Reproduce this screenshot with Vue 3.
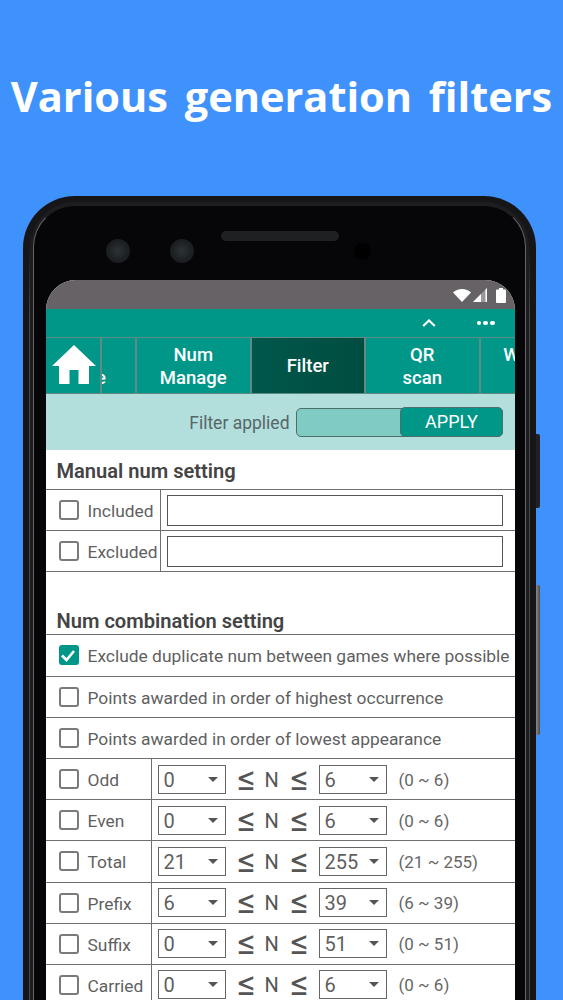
<script setup>
const tabs = [
  { id: 'gen', lines: ['Num', 'Create'] },
  { id: 'manage', lines: ['Num', 'Manage'] },
  { id: 'filter', lines: ['Filter'], active: true },
  { id: 'qr', lines: ['QR', 'scan'] },
  { id: 'win', lines: ['Winning', 'stats'] }
]
const manual = ['Included', 'Excluded']
const combos = [
  { label: 'Exclude duplicate num between games where possible', checked: true },
  { label: 'Points awarded in order of highest occurrence' },
  { label: 'Points awarded in order of lowest appearance' }
]
const ranges = [
  { label: 'Odd', min: 0, max: 6 },
  { label: 'Even', min: 0, max: 6 },
  { label: 'Total', min: 21, max: 255 },
  { label: 'Prefix', min: 6, max: 39 },
  { label: 'Suffix', min: 0, max: 51 },
  { label: 'Carried', min: 0, max: 6 }
]
</script>

<template>
  <div class="page">
    <header class="hero"><h1>Various generation filters</h1></header>

    <div class="phone">
      <span class="side-btn power"></span>
      <span class="side-btn volume"></span>
      <div class="bezel">
        <div class="sensors">
          <span class="camera"></span>
          <span class="camera second"></span>
          <span class="speaker"></span>
          <span class="hole"></span>
        </div>

        <div class="screen">
          <div class="status">
            <svg class="s-wifi" viewBox="0 0 18 13"><path d="M0 3.6C2.4 1.3 5.5 0 9 0s6.600 1.300 9 3.600L9 13z" fill="#fff" /></svg>
            <svg class="s-signal" viewBox="0 0 14 14">
              <path d="M14 0V14H0z" fill="#fff" fill-opacity=".35" />
              <path d="M8 6V14H0zM14 0V14H12.500V1.500z" fill="#fff" />
            </svg>
            <svg class="s-batt" viewBox="0 0 10 15"><path d="M3 0h4v1.500h2a1 1 0 0 1 1 1V14a1 1 0 0 1-1 1H1a1 1 0 0 1-1-1V2.500a1 1 0 0 1 1-1h2z" fill="#fff" /></svg>
          </div>

          <div class="appbar">
            <svg class="chev" viewBox="0 0 14 8"><path d="M1.200 7 7 1.500 12.800 7" fill="none" stroke="#fff" stroke-width="2.200" /></svg>
            <div class="dots"><i></i><i></i><i></i></div>
          </div>

          <nav class="tabs">
            <div class="home">
              <svg viewBox="0 0 44 39"><path d="M22 0 44 21H37V39H26.500V25H17.500V39H7V21H0z" fill="#fff" /></svg>
            </div>
            <div v-for="t in tabs" :key="t.id" class="tab" :class="{ active: t.active }">
              <span v-for="l in t.lines" :key="l">{{ l }}</span>
            </div>
          </nav>

          <div class="filterbar">
            <span class="applied">Filter applied</span>
            <div class="toggle"><span class="apply">APPLY</span></div>
          </div>

          <div class="content">
            <h2 class="head">Manual num setting</h2>
            <div v-for="m in manual" :key="m" class="row split-manual">
              <label class="cell"><span class="box"></span><span class="lbl">{{ m }}</span></label>
              <div class="cell field"><span class="input"></span></div>
            </div>
            <div class="rule"></div>

            <h2 class="head second">Num combination setting</h2>
            <div v-for="c in combos" :key="c.label" class="row">
              <label class="cell">
                <span class="box" :class="{ on: c.checked }">
                  <svg v-if="c.checked" viewBox="0 0 20 20"><path d="M4 10.500 8.500 15 16 6" fill="none" stroke="#fff" stroke-width="2.600" /></svg>
                </span>
                <span class="lbl">{{ c.label }}</span>
              </label>
            </div>
            <div v-for="r in ranges" :key="r.label" class="row split-range">
              <label class="cell"><span class="box"></span><span class="lbl">{{ r.label }}</span></label>
              <div class="cell range">
                <span class="select"><span>{{ r.min }}</span><i></i></span>
                <span class="le">≤</span>
                <span class="n">N</span>
                <span class="le">≤</span>
                <span class="select"><span>{{ r.max }}</span><i></i></span>
                <span class="hint">({{ r.min }} ~ {{ r.max }})</span>
              </div>
            </div>
          </div>
        </div>
      </div>
    </div>
  </div>
</template>

<style scoped>
.page {
  width: 563px;
  height: 1000px;
  overflow: hidden;
  background: #3f92fb;
  font-family: Roboto, "Liberation Sans", sans-serif;
}
.hero {
  height: 196px;
  box-sizing: border-box;
  padding-top: 65px;
  text-align: center;
}
.hero h1 {
  margin: 0;
  font: 700 41.500px/62px "Open Sans", sans-serif;
  word-spacing: 6px;
  color: #fff;
  white-space: nowrap;
}

.phone {
  position: relative;
  width: 513px;
  margin-left: 23px;
  padding: 9px 10px 0;
  box-sizing: border-box;
  background: #161618;
  border-radius: 52px 52px 0 0;
}
.phone::before {
  content: "";
  position: absolute;
  top: 50px;
  bottom: 0;
  left: 6px;
  right: 6px;
  background:
    linear-gradient(transparent, #48484a 70px) left / 1px 100% no-repeat,
    linear-gradient(transparent, #48484a 70px) right / 1px 100% no-repeat;
  pointer-events: none;
}
.side-btn {
  position: absolute;
  left: 513px;
  width: 4px;
  background: #222226;
  border-radius: 0 2px 2px 0;
}
.power { top: 238px; height: 74px; }
.volume { top: 389px; height: 150px; background: linear-gradient(90deg, #8a8a8a, #4a4a4a); }

.bezel {
  padding: 0 9.5px 0 11.5px;
  background: #060608;
  border: solid #666668;
  border-top-color: #202022;
  border-width: 1px 1.5px 0;
  border-radius: 42px 42px 0 0;
  box-shadow: 0 0 0 3px #1d1d1f;
}
.sensors {
  display: flex;
  align-items: center;
  height: 74px;
  padding-left: 60px;
}
.camera {
  width: 24px;
  height: 24px;
  flex: none;
  border-radius: 50%;
  background: radial-gradient(circle, #2c3336 0, #1e2225 50%, #141719 100%);
  margin-top: 16px;
}
.camera.second { margin-left: 40px; }
.speaker {
  width: 118px;
  height: 10px;
  flex: none;
  margin: -14px 0 0 27px;
  border-radius: 5px;
  background: #1f2022;
}
.hole {
  width: 17px;
  height: 17px;
  flex: none;
  margin: 16px 0 0 15px;
  border-radius: 50%;
  background: #000;
}

.screen {
  width: 469px;
  border-radius: 30px 30px 0 0;
  overflow: hidden;
  background: #fff;
}
.status {
  height: 29px;
  box-sizing: border-box;
  padding: 1px 9px 0 0;
  background: #666266;
  display: flex;
  justify-content: flex-end;
  align-items: center;
}
.status svg { display: block; }
.s-wifi { width: 18px; height: 13px; }
.s-signal { width: 14px; height: 14px; margin-left: 2px; }
.s-batt { width: 10px; height: 15px; margin-left: 9px; }

.appbar {
  height: 28px;
  background: #009688;
  display: flex;
  justify-content: flex-end;
  align-items: center;
  padding-right: 20px;
}
.chev { width: 14px; height: 8px; margin: 0 41px 0 0; }
.dots { display: flex; gap: 2.250px; }
.dots i { width: 4.500px; height: 4.500px; border-radius: 50%; background: #fff; }

.tabs {
  position: relative;
  display: flex;
  height: 57px;
  background: #009688;
  overflow: hidden;
}
.home {
  position: absolute;
  left: 0;
  top: 0;
  z-index: 1;
  width: 56px;
  height: 100%;
  box-sizing: border-box;
  padding: 7px 0 0 6px;
  background: #009688;
  border: solid #5f8a85;
  border-width: 1px 2px 1px 0;
}
.home svg { display: block; width: 44px; height: 39px; }
.tab {
  flex: none;
  width: 114.500px;
  box-sizing: border-box;
  padding-top: 2px;
  border: solid #5f8a85;
  border-width: 1px 2px 1px 0;
  display: flex;
  flex-direction: column;
  align-items: center;
  justify-content: center;
  color: #fff;
  font-size: 18.500px;
  font-weight: 500;
  line-height: 23px;
}
.home + .tab { margin-left: -23px; }
.tab.active { background: linear-gradient(90deg, #00574b, #004d40); }

.filterbar {
  height: 56px;
  background: #b2dfdb;
  display: flex;
  justify-content: flex-end;
  align-items: center;
  padding-right: 12px;
}
.applied { padding-top: 2px; font-size: 17.500px; color: #56666a; margin-right: 6px; }
.toggle {
  width: 207px;
  height: 29px;
  box-sizing: border-box;
  border: 1.5px solid #4c6f6c;
  border-radius: 5px;
  background: #80cbc4;
  display: flex;
  justify-content: flex-end;
}
.apply {
  width: 103px;
  margin: -1.500px;
  box-sizing: border-box;
  border: 1.5px solid #4c6f6c;
  border-radius: 5px;
  background: #009688;
  color: #fff;
  font-size: 18px;
  line-height: 28px;
  text-align: center;
}

.content { color: #555; }
.head {
  margin: 0;
  height: 39px;
  padding-left: 11px;
  font-size: 20.100px;
  font-weight: 600;
  line-height: 43px;
  color: #444;
  box-sizing: border-box;
}
.head.second { margin-top: 35px; height: 27px; line-height: 28px; }
.row {
  display: flex;
  height: 41.200px;
  box-sizing: border-box;
  border-top: 1.5px solid #6f6f6f;
}
.rule { border-top: 1.5px solid #6f6f6f; }
.cell {
  display: flex;
  align-items: center;
  min-width: 0;
}
.row > .cell:first-child { padding-left: 13px; }
.split-manual > .cell:first-child { width: 115px; flex: none; box-sizing: border-box; border-right: 1.5px solid #6f6f6f; }
.split-range > .cell:first-child { width: 106px; flex: none; box-sizing: border-box; border-right: 1.5px solid #6f6f6f; }
.box {
  width: 20px;
  height: 20px;
  flex: none;
  box-sizing: border-box;
  border: 2.5px solid #7a7a7a;
  border-radius: 3px;
  margin-right: 9px;
}
.box.on { background: #009688; border-color: #009688; }
.box svg { display: block; width: 20px; height: 20px; margin: -2.500px; }
.lbl { padding-top: 2px; font-size: 17.400px; color: #5f5f5f; white-space: nowrap; }
.field { flex: 1; padding: 0 12px 0 6px; }
.input {
  flex: 1;
  height: 31px;
  box-sizing: border-box;
  border: 1.5px solid #555;
  background: #fff;
}
.range { flex: 1; padding-left: 6px; }
.select {
  flex: none;
  width: 68px;
  height: 29px;
  box-sizing: border-box;
  border: 1.5px solid #666;
  padding: 1px 7px 0 5px;
  display: flex;
  align-items: center;
  justify-content: space-between;
  font-size: 20px;
  color: #5f5f5f;
}
.select i {
  width: 0;
  height: 0;
  border: solid transparent;
  border-width: 5px 5px 0;
  border-top-color: #555;
  margin-top: -1px;
}
.le {
  width: 16px;
  margin-left: 11px;
  font: 400 23px/29px "DejaVu Sans", sans-serif;
  text-align: center;
  color: #555;
  transform: scaleY(1.4);
}
.n { width: 14px; margin-left: 12px; font-size: 20px; color: #555; text-align: center; padding-top: 1px; }
.le + .select { margin-left: 13px; }
.n + .le { margin-left: 11px; }
.hint { margin-left: 12px; padding-top: 1px; font-size: 17px; color: #666; white-space: nowrap; }
</style>
